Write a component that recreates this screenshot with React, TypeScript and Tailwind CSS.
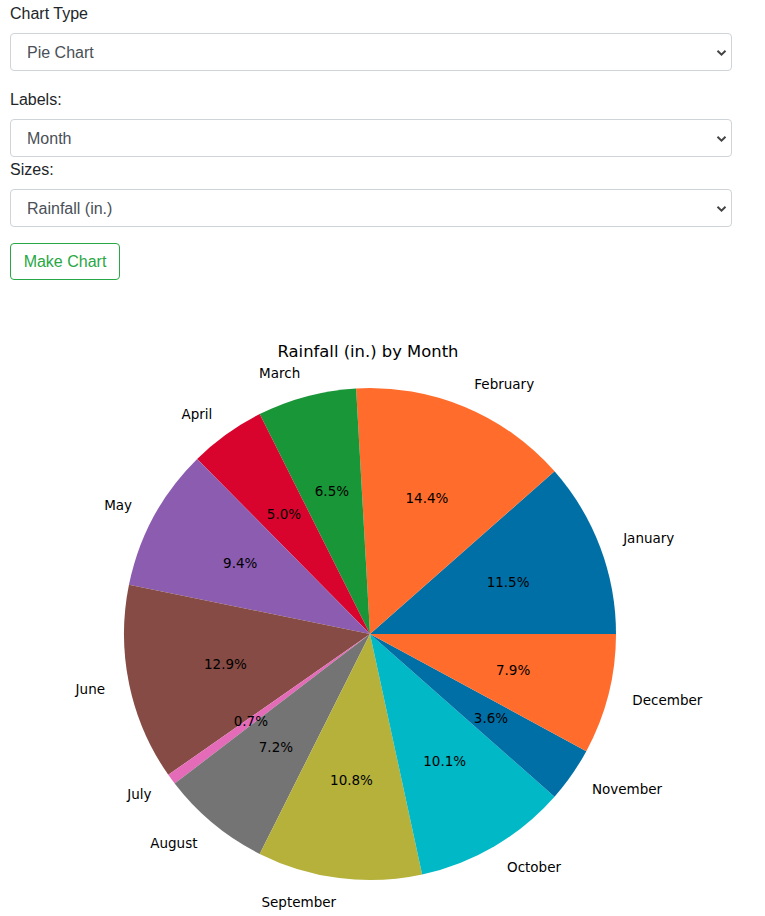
import React from "react";

const data: [string, number, string][] = [
  ["January", 11.5, "#006fa6"],
  ["February", 14.4, "#ff6c2b"],
  ["March", 6.5, "#199638"],
  ["April", 5.0, "#d8042e"],
  ["May", 9.4, "#8b5caf"],
  ["June", 12.9, "#854b44"],
  ["July", 0.7, "#e46bb8"],
  ["August", 7.2, "#747474"],
  ["September", 10.8, "#b5b13b"],
  ["October", 10.1, "#00b8c6"],
  ["November", 3.6, "#006fa6"],
  ["December", 7.9, "#ff6c2b"],
];

function Select({ value }: { value: string }) {
  return (
    <div className="relative w-[722px] h-[38px] rounded-[4px] border border-[#ced4da] bg-white flex items-center">
      <span className="pl-[16px] pt-[2px] text-[16px] text-[#495057]">{value}</span>
      <svg className="absolute right-[4px] top-[15px]" width="11" height="8" viewBox="0 0 11 8">
        <path d="M1.5 1.8 L5.5 5.6 L9.5 1.8" fill="none" stroke="#444" strokeWidth="2" />
      </svg>
    </div>
  );
}

function Pie() {
  const cx = 370;
  const cy = 344;
  const r = 246;
  let acc = 0;
  const total = data.reduce((s, d) => s + d[1], 0);
  const items = data.map(([label, v, color]) => {
    const a0 = (acc / total) * 2 * Math.PI;
    acc += v;
    const a1 = (acc / total) * 2 * Math.PI;
    const mid = (a0 + a1) / 2;
    const x0 = cx + r * Math.cos(a0);
    const y0 = cy - r * Math.sin(a0);
    const x1 = cx + r * Math.cos(a1);
    const y1 = cy - r * Math.sin(a1);
    const large = a1 - a0 > Math.PI ? 1 : 0;
    const d = `M${cx} ${cy} L${x0} ${y0} A${r} ${r} 0 ${large} 0 ${x1} ${y1} Z`;
    const lx = cx + 1.1 * r * Math.cos(mid);
    const ly = cy - 1.1 * r * Math.sin(mid);
    const px = cx + 0.6 * r * Math.cos(mid);
    const py = cy - 0.6 * r * Math.sin(mid);
    return { label, v, color, d, lx, ly, px, py, right: Math.cos(mid) > 0 };
  });
  return (
    <svg width="765" height="626" viewBox="0 0 765 626" className="block">
      <g style={{ fontFamily: "'DejaVu Sans', sans-serif" }}>
        <text x="368" y="67" textAnchor="middle" fontSize="16.4" fill="#000">
          Rainfall (in.) by Month
        </text>
        {items.map((it) => (
          <path key={it.label} d={it.d} fill={it.color} />
        ))}
        {items.map((it) => (
          <text
            key={it.label + "l"}
            x={it.lx}
            y={it.ly + 5}
            fontSize="13.5"
            fill="#000"
            textAnchor={it.right ? "start" : "end"}
          >
            {it.label}
          </text>
        ))}
        {items.map((it) => (
          <text
            key={it.label + "p"}
            x={it.px}
            y={it.py + 4.7}
            fontSize="13.5"
            fill="#000"
            textAnchor="middle"
          >
            {it.v.toFixed(1)}%
          </text>
        ))}
      </g>
    </svg>
  );
}

export default function App() {
  return (
    <div className="bg-white w-[765px] min-h-[916px] text-[#212529]" style={{ fontFamily: "'Liberation Sans', Arial, sans-serif" }}>
      <div className="px-[10px]">
        <div className="pt-[2px] h-[25px] leading-6 text-[16px] mb-[8px]">Chart Type</div>
        <Select value="Pie Chart" />
        <div className="pt-[1px] h-[24px] leading-6 text-[16px] mt-[16px] mb-[8px]">Labels:</div>
        <Select value="Month" />
        <div className="pt-[1px] h-[24px] leading-6 text-[16px] mb-[8px]">Sizes:</div>
        <Select value="Rainfall (in.)" />
        <button className="mt-[16px] pt-[1px] h-[37px] w-[110px] rounded-[4px] border border-[#28a745] text-[#28a745] text-[16px] bg-white">
          Make Chart
        </button>
      </div>
      <div className="mt-[10px]">
        <Pie />
      </div>
    </div>
  );
}
